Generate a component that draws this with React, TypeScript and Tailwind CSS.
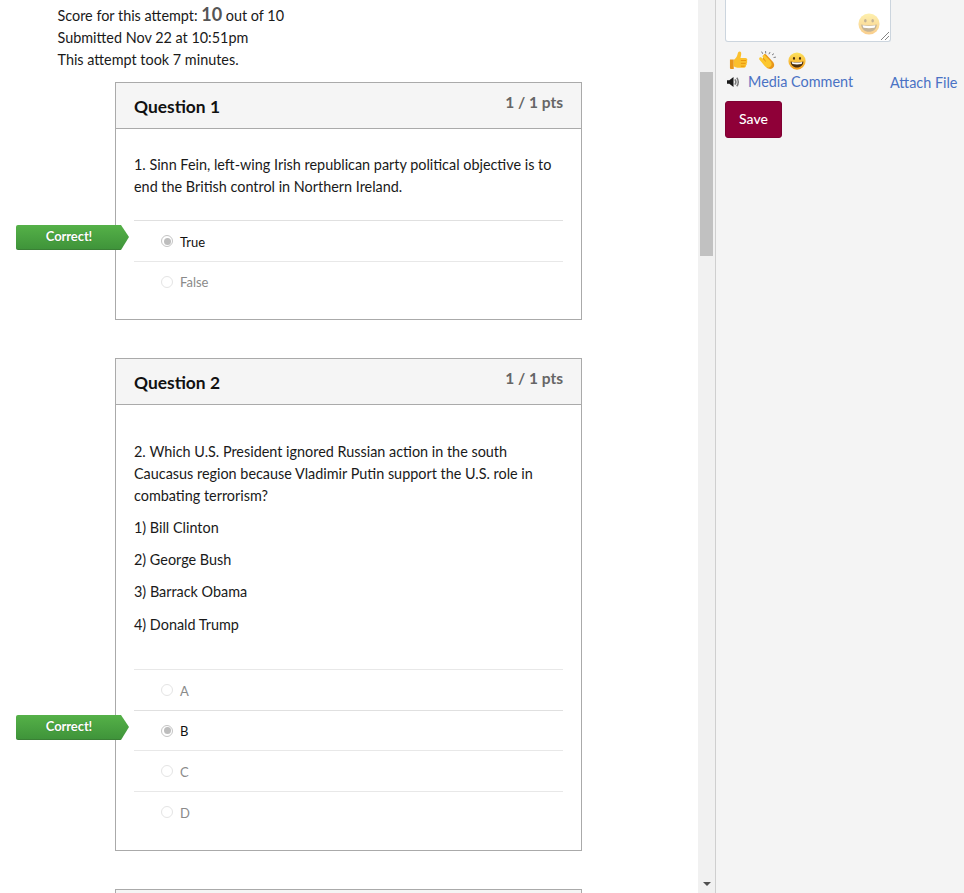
import React from "react";

function Plain({ children }: { children: React.ReactNode }) {
  return <span className="[font-variant-ligatures:common-ligatures]">{children}</span>;
}

function Grin({ className = "", soft }: { className?: string; soft?: boolean }) {
  return (
    <svg viewBox="0 0 24 24" className={className}>
      <defs>
        <linearGradient id="g1" x1="0" y1="0" x2="0" y2="1">
          <stop offset="0" stopColor="#fde35f" />
          <stop offset="1" stopColor="#f59e1c" />
        </linearGradient>
      </defs>
      <circle cx="12" cy="12" r="11.5" fill="url(#g1)" />
      <ellipse cx="8" cy="8.500" rx="1.400" ry="1.900" fill={soft ? "#8a6a30" : "#4a2f10"} />
      <ellipse cx="16" cy="8.500" rx="1.400" ry="1.900" fill={soft ? "#8a6a30" : "#4a2f10"} />
      <path d="M3.500 12.500c5.500 1.500 11.500 1.500 17 0 0 4.800-3.800 8-8.500 8s-8.500-3.200-8.500-8z" fill={soft ? "#8a6a30" : "#4a2f10"} />
      <path d="M5 13.400c4.600 1 9.400 1 14 0-.2 1.100-.5 2-1 2.700-3.900.700-8.100.700-12 0-.5-.7-.8-1.600-1-2.700z" fill="#fff" />
    </svg>
  );
}

function Thumb() {
  return (
    <svg viewBox="0 0 20 20" className="h-[19px] w-[19px]">
      <path d="M1 9h4v10H2a1 1 0 0 1-1-1z" fill="#e8961a" />
      <path d="M5 9.500c2-1.500 3.500-3.500 4-6 .3-1.800 1-3 2.200-3 1.500 0 2 1.800 1.500 4l-.6 2.800h5.200c1.500 0 2.300 1.200 1.900 2.400l-.3.800c.5.900.3 1.800-.3 2.400.3.900 0 1.800-.7 2.300.1 1.300-.7 2.300-2 2.300H9c-1.600 0-2.800-.6-4-1.100z" fill="#fbc02d" />
      <path d="M12.500 10h5.500M12.500 13h5M12.500 16h4" stroke="#e8930c" strokeWidth="1" fill="none" />
    </svg>
  );
}

function Clap() {
  return (
    <svg viewBox="0 0 20 20" className="h-[19px] w-[19px]">
      <path d="M6.500 3.500c.8-.5 1.700-.2 2.300.5l6.800 7.200c1.800 2 2 4.800.2 6.500-1.900 1.800-4.800 1.600-6.700-.3L4.500 12c-.6-.7-.6-1.600 0-2.200z" fill="#e8961a" />
      <path d="M1.600 7c.7-.7 1.700-.6 2.400.1l4 4.200.6-.6-3.400-4c-.7-.8-.6-1.700.1-2.300s1.600-.4 2.300.3l5.400 5.900c1.700 1.900 1.800 4.300.3 5.800-1.600 1.600-4.100 1.500-5.900-.3L1.800 9.400C1.100 8.700 1 7.700 1.600 7z" fill="#fcc72e" />
      <path d="M4 1l.8 1.600M8 .5l.1 1.700M12.500 1.500l-.8 1.500M16.500 3l-1.400 1M18.500 6.500l-1.700.3" stroke="#77777a" strokeWidth="1" strokeLinecap="round" fill="none" />
    </svg>
  );
}

function Speaker() {
  return (
    <svg viewBox="0 0 14 12" className="h-[12px] w-[13px]">
      <path d="M0 4h2.500L7 .5v11L2.500 8H0z" fill="#1a1a1a" />
      <path d="M8.500 3.200c1.200 1.500 1.200 4.100 0 5.600M10.500 1.500c2.200 2.500 2.200 6.500 0 9" stroke="#777" strokeWidth="1.600" fill="none" />
    </svg>
  );
}

function CorrectTag({ top }: { top: number }) {
  return (
    <div className="absolute left-[16px] flex h-[25px] w-[113px]" style={{ top }}>
      <div className="flex h-full w-[104px] items-center justify-center rounded-l-[2px] border-b border-[#3a8035] bg-gradient-to-b from-[#55b148] to-[#3f943a] pb-[2px] text-[13px] font-bold leading-none text-white [text-shadow:0_0_1px_#2f6f2a]">
        <span className="ml-[2px] tracking-[-0.1px] [font-variant-ligatures:common-ligatures]">Correct!</span>
      </div>
      <svg viewBox="0 0 9 25" className="h-[25px] w-[9px]">
        <defs>
          <linearGradient id="tag" x1="0" y1="0" x2="0" y2="1">
            <stop offset="0" stopColor="#55b148" />
            <stop offset="1" stopColor="#3f943a" />
          </linearGradient>
        </defs>
        <path d="M0 0L1 0L9 12L1 25L0 25z" fill="url(#tag)" />
      </svg>
    </div>
  );
}

function Answer({ label, selected, short, tight }: { label: string; selected?: boolean; short?: boolean; tight?: boolean }) {
  return (
    <div className={`flex ${short ? "h-[40px]" : "h-[41px]"} items-center border-t ${selected ? "border-[#e0e0e0]" : "border-[#e8e8e8]"} pl-[27px]`}>
      <span className={`flex h-[12px] w-[12px] items-center justify-center rounded-full border ${selected ? "border-[#c4c4c4]" : "border-[#e4e4e4]"} bg-white`}>
        {selected && <span className="h-[7px] w-[7px] rounded-full bg-[#bdbdbd]" />}
      </span>
      <span className={`ml-[7px] ${tight ? "pt-[2px]" : "pt-[4px]"} text-[13px] ${selected ? "text-[#111]" : "text-[#8a8a8a]"}`}>{label}</span>
    </div>
  );
}

function Card({ title, children, className = "" }: { title?: string; children?: React.ReactNode; className?: string }) {
  return (
    <div className={`ml-[115px] w-[467px] border border-[#aaaaaa] ${className}`}>
      <div className="flex h-[46px] items-start justify-between border-b border-[#aaaaaa] bg-[#f5f5f5] px-[18px]">
        {title && (
          <>
            <span className="mt-[13px] text-[17.4px] font-bold leading-[22px] text-[#111]">{title}</span>
            <span className="mt-[9px] text-[15.5px] font-bold leading-[20px] text-[#666]">1 / 1 pts</span>
          </>
        )}
      </div>
      {children}
    </div>
  );
}

export default function App() {
  return (
    <div className="flex h-[893px] w-[964px] overflow-hidden bg-white font-['Lato','Noto_Sans',sans-serif] text-[14px] text-[#1a1a1a] [font-variant-ligatures:common-ligatures_discretionary-ligatures]">
      <main className="relative w-[698px] shrink-0 overflow-hidden">
        <div className="ml-[57.5px] pt-[2px] text-[14.4px] leading-[21px]">
          <p className="h-[25px] leading-[25px]">
            Score for this attempt: <b className="text-[18px] font-bold text-[#555]">10</b> out of 10
          </p>
          <p className="h-[21px]">Submitted Nov 22 at 10:51pm</p>
          <p className="mt-[1px] h-[21px]">This attempt took 7 minutes.</p>
        </div>

        <Card title="Question 1" className="mt-[12px] h-[238px]">
          <div className="px-[18px]">
            <p className="h-[91px] pt-[25px] text-[14.4px] leading-[22px]">
              1. Sinn Fein, left-wing Irish republican party political objective is to end the British control in Northern Ireland.
            </p>
            <Answer label="True" selected />
            <Answer label="False" tight />
          </div>
        </Card>

        <Card title="Question 2" className="mt-[38px] h-[493px]">
          <div className="px-[18px]">
            <div className="h-[264px] pt-[36px] text-[14.4px] leading-[22px]">
              <p>2. <Plain>Which</Plain> U.S. President ignored Russian action in the south Caucasus region because Vladimir Putin support the U.S. role in combating terrorism?</p>
              <p className="mt-[10px]">1) Bill Clinton</p>
              <p className="mt-[10px]">2) George Bush</p>
              <p className="mt-[10px]">3) <Plain>Barrack</Plain> Obama</p>
              <p className="mt-[11px]">4) Donald Trump</p>
            </div>
            <Answer label="A" />
            <Answer label="B" selected short tight />
            <Answer label="C" />
            <Answer label="D" />
          </div>
        </Card>

        <Card className="mt-[38px]" />

        <CorrectTag top={225} />
        <CorrectTag top={715} />
      </main>

      <div className="relative flex w-[17px] shrink-0 flex-col bg-[#f1f1f1]">
        <div className="ml-[2px] mt-[72px] h-[184px] w-[13px] bg-[#c1c1c1]" />
        <svg viewBox="0 0 8 4" className="absolute left-[5px] top-[882px] h-[4px] w-[8px]">
          <path d="M0 0h8L4 4z" fill="#505050" />
        </svg>
      </div>

      <aside className="w-[249px] border-l border-[#cfcfcf] bg-[#f4f4f4]">
        <div className="relative ml-[9px] h-[42px] w-[166px] rounded-b-[3px] border border-t-0 border-[#ccd5de] bg-white">
          <Grin soft className="absolute left-[132px] top-[13px] h-[22px] w-[22px] opacity-50" />
          <svg viewBox="0 0 8 8" className="absolute bottom-[1px] right-[1px] h-[8px] w-[8px]">
            <path d="M0 8L8 0M4 8L8 4" stroke="#666" strokeWidth="0.8" />
          </svg>
        </div>
        <div className="ml-[13px] mt-[9px] flex h-[19px] items-center">
          <Thumb />
          <span className="ml-[10px]"><Clap /></span>
          <span className="ml-[11px]"><Grin className="h-[18px] w-[18px]" /></span>
        </div>
        <div className="ml-[11px] flex h-[24px] items-center text-[14.4px] text-[#4a72c4] [font-variant-ligatures:common-ligatures]">
          <Speaker />
          <span className="ml-[8px] w-[142px]">Media Comment</span>
          <span className="mt-[2px] whitespace-nowrap">Attach File</span>
        </div>
        <button className="ml-[9px] mt-[7px] h-[37px] w-[57px] rounded-[3px] border border-[#7f0032] bg-[#8f0038] pb-[3px] text-[14px] font-medium text-white">
          Save
        </button>
      </aside>
    </div>
  );
}
